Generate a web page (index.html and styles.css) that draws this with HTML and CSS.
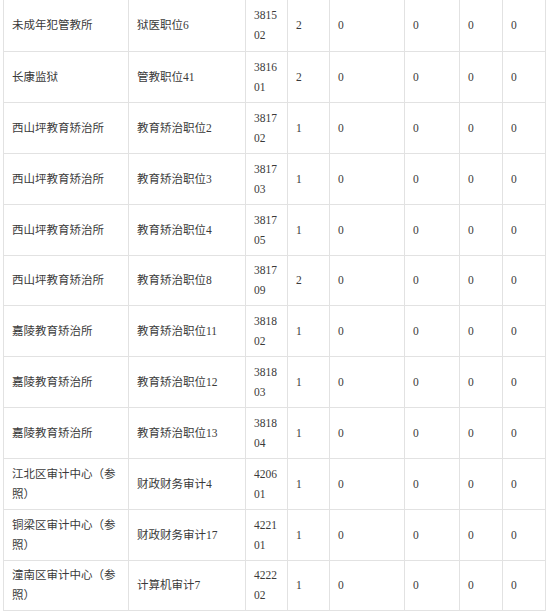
FILE: index.html
```html
<!DOCTYPE html>
<html lang="zh">
<head>
<meta charset="utf-8">
<title>职位统计</title>
<link rel="stylesheet" href="styles.css">
</head>
<body>
<table class="grid">
  <colgroup>
    <col class="c1"><col class="c2"><col class="c3"><col class="c4"><col class="c5"><col class="c6"><col class="c7"><col class="c8">
  </colgroup>
  <tbody>
    <tr><td>未成年犯管教所</td><td>狱医职位6</td><td class="code">381502</td><td>2</td><td>0</td><td>0</td><td>0</td><td>0</td></tr>
    <tr><td>长康监狱</td><td>管教职位41</td><td class="code">381601</td><td>2</td><td>0</td><td>0</td><td>0</td><td>0</td></tr>
    <tr><td>西山坪教育矫治所</td><td>教育矫治职位2</td><td class="code">381702</td><td>1</td><td>0</td><td>0</td><td>0</td><td>0</td></tr>
    <tr><td>西山坪教育矫治所</td><td>教育矫治职位3</td><td class="code">381703</td><td>1</td><td>0</td><td>0</td><td>0</td><td>0</td></tr>
    <tr><td>西山坪教育矫治所</td><td>教育矫治职位4</td><td class="code">381705</td><td>1</td><td>0</td><td>0</td><td>0</td><td>0</td></tr>
    <tr class="short"><td>西山坪教育矫治所</td><td>教育矫治职位8</td><td class="code">381709</td><td>2</td><td>0</td><td>0</td><td>0</td><td>0</td></tr>
    <tr><td>嘉陵教育矫治所</td><td>教育矫治职位11</td><td class="code">381802</td><td>1</td><td>0</td><td>0</td><td>0</td><td>0</td></tr>
    <tr><td>嘉陵教育矫治所</td><td>教育矫治职位12</td><td class="code">381803</td><td>1</td><td>0</td><td>0</td><td>0</td><td>0</td></tr>
    <tr><td>嘉陵教育矫治所</td><td>教育矫治职位13</td><td class="code">381804</td><td>1</td><td>0</td><td>0</td><td>0</td><td>0</td></tr>
    <tr><td>江北区审计中心（参照）</td><td>财政财务审计4</td><td class="code">420601</td><td>1</td><td>0</td><td>0</td><td>0</td><td>0</td></tr>
    <tr><td>铜梁区审计中心（参照）</td><td>财政财务审计17</td><td class="code">422101</td><td>1</td><td>0</td><td>0</td><td>0</td><td>0</td></tr>
    <tr class="short"><td>潼南区审计中心（参照）</td><td>计算机审计7</td><td class="code">422202</td><td>1</td><td>0</td><td>0</td><td>0</td><td>0</td></tr>
  </tbody>
</table>
</body>
</html>
```

FILE: styles.css
```css
html, body {
  margin: 0;
  padding: 0;
  background: #ffffff;
}

body {
  padding-left: 3px;
  font-family: "Liberation Serif", "Noto Sans CJK SC", serif;
  font-size: 11.5px;
  color: #3a3a3a;
}

.grid {
  border-collapse: collapse;
  table-layout: fixed;
  width: 543px;
}

.c1 { width: 125px; }
.c2 { width: 117px; }
.c3 { width: 42px; }
.c4 { width: 42px; }
.c5 { width: 75px; }
.c6 { width: 55px; }
.c7 { width: 43px; }
.c8 { width: 43px; }

.grid tr {
  height: 51px;
}

.grid tr.short {
  height: 50px;
}

.grid td {
  border: 1px solid #e2e2e2;
  padding: 0 8px;
  line-height: 20px;
  vertical-align: middle;
  text-align: left;
}

.grid tr:first-child td {
  border-top: none;
}

.grid td.code {
  word-break: break-all;
}
```
